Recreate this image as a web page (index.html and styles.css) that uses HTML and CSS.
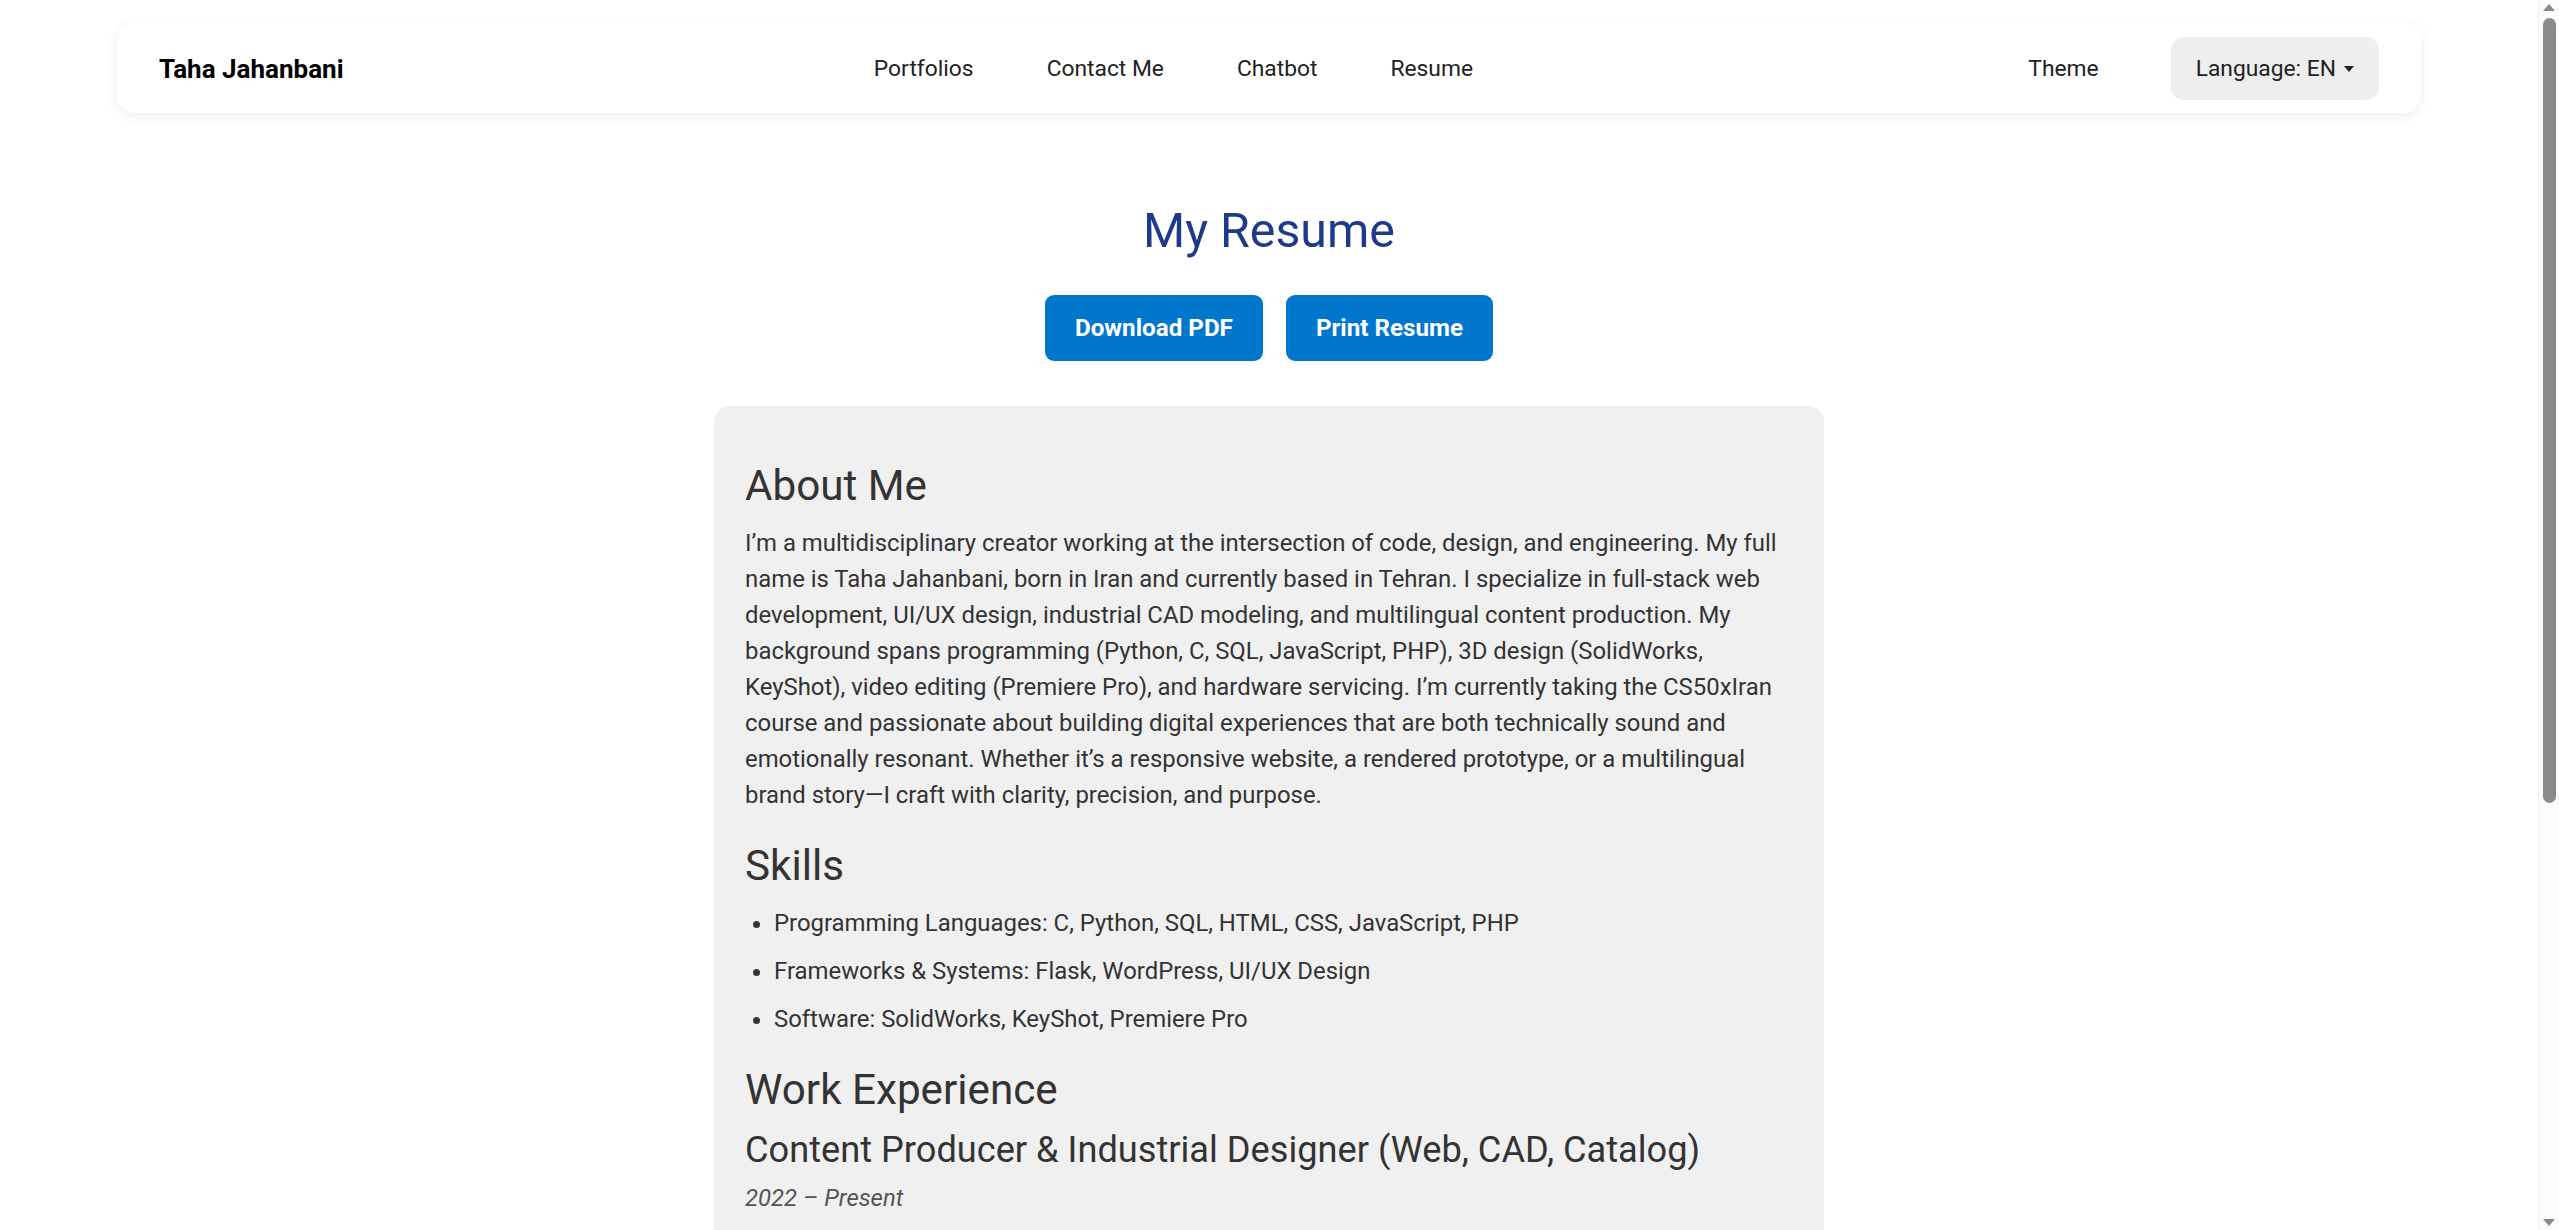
FILE: index.html
```html
<!DOCTYPE html>
<html lang="en">
<head>
<meta charset="utf-8">
<title>Resume - Taha Jahanbani</title>
<link rel="stylesheet" href="styles.css">
</head>
<body>
<header class="navbar">
  <div class="brand">Taha Jahanbani</div>
  <nav class="nav-links">
    <a class="nav-link" href="#">Portfolios</a>
    <a class="nav-link" href="#">Contact Me</a>
    <a class="nav-link" href="#">Chatbot</a>
    <a class="nav-link" href="#">Resume</a>
  </nav>
  <div class="nav-right">
    <button class="theme-btn" type="button">Theme</button>
    <button class="lang-btn" type="button">Language: EN<span class="caret"></span></button>
  </div>
</header>

<main class="page">
  <h1 class="page-title">My Resume</h1>
  <div class="actions">
    <button class="action-btn" type="button">Download PDF</button>
    <button class="action-btn" type="button">Print Resume</button>
  </div>

  <section class="resume">
    <h2 class="section-title">About Me</h2>
    <p class="text">I’m a multidisciplinary creator working at the intersection of code, design, and engineering. My full name is Taha Jahanbani, born in Iran and currently based in Tehran. I specialize in full-stack web development, UI/UX design, industrial CAD modeling, and multilingual content production. My background spans programming (Python, C, SQL, JavaScript, PHP), 3D design (SolidWorks, KeyShot), video editing (Premiere Pro), and hardware servicing. I’m currently taking the CS50xIran course and passionate about building digital experiences that are both technically sound and emotionally resonant. Whether it’s a responsive website, a rendered prototype, or a multilingual brand story—I craft with clarity, precision, and purpose.</p>

    <h2 class="section-title">Skills</h2>
    <ul class="list">
      <li>Programming Languages: C, Python, SQL, HTML, CSS, JavaScript, PHP</li>
      <li>Frameworks &amp; Systems: Flask, WordPress, UI/UX Design</li>
      <li>Software: SolidWorks, KeyShot, Premiere Pro</li>
    </ul>

    <h2 class="section-title">Work Experience</h2>
    <h3 class="job-title">Content Producer &amp; Industrial Designer (Web, CAD, Catalog)</h3>
    <p class="date">2022 – Present</p>
    <ul class="list">
      <li>Designed and developed responsive websites and landing pages</li>
      <li>Modeled and rendered industrial products in SolidWorks and KeyShot</li>
      <li>Produced multilingual catalogs and marketing content</li>
    </ul>

    <h2 class="section-title">Education</h2>
    <h3 class="job-title">CS50xIran – Introduction to Computer Science</h3>
    <p class="date">2024 – Present</p>

    <h2 class="section-title">Languages</h2>
    <ul class="list">
      <li>Persian (Native)</li>
      <li>English (Professional)</li>
    </ul>
  </section>
</main>

<div class="scrollbar" aria-hidden="true">
  <span class="sb-arrow sb-up"></span>
  <span class="sb-thumb"></span>
  <span class="sb-arrow sb-down"></span>
</div>
</body>
</html>
```

FILE: styles.css
```css
* {
  box-sizing: border-box;
}

html, body {
  margin: 0;
  padding: 0;
  background: #ffffff;
}

body {
  font-family: Roboto, "Noto Sans", "Liberation Sans", sans-serif;
  color: #333333;
  padding-top: 23px;
  padding-right: 21px;
  padding-bottom: 80px;
}

/* Navbar */
.navbar {
  display: flex;
  align-items: center;
  justify-content: space-between;
  margin: 0 117px;
  padding: 14px 42px 13px 42px;
  background: #ffffff;
  border-radius: 18px;
  box-shadow: 0 3px 14px rgba(0, 0, 0, 0.07);
}

.brand {
  font-size: 26px;
  font-weight: 700;
  color: #000000;
  line-height: 30px;
}

.nav-links {
  display: flex;
  align-items: center;
  gap: 47px;
}

.nav-link {
  padding: 0 13px;
  font-size: 22.8px;
  color: #222222;
  text-decoration: none;
  line-height: 30px;
}

.nav-right {
  display: flex;
  align-items: center;
  gap: 47px;
}

.theme-btn,
.lang-btn {
  font-family: inherit;
  font-size: 22.8px;
  line-height: 29px;
  color: #222222;
  border: none;
  border-radius: 13px;
  padding: 17px 25px;
  cursor: pointer;
}

.theme-btn {
  background: transparent;
}

.lang-btn {
  background: #eeeeee;
  display: flex;
  align-items: center;
}

.caret {
  display: inline-block;
  width: 0;
  height: 0;
  margin-left: 8px;
  border-left: 5px solid transparent;
  border-right: 5px solid transparent;
  border-top: 6px solid #222222;
}

/* Page */
.page {
  display: flex;
  flex-direction: column;
  align-items: center;
}

.page-title {
  margin: 87px 0 0;
  font-size: 48.3px;
  font-weight: 400;
  line-height: 61px;
  color: #1e3a8a;
}

.actions {
  display: flex;
  gap: 23px;
  margin-top: 34px;
}

.action-btn {
  font-family: inherit;
  font-size: 24.2px;
  font-weight: 700;
  line-height: 30px;
  color: #ffffff;
  background: #0077cc;
  border: none;
  border-radius: 9px;
  padding: 18px 30px;
  cursor: pointer;
}

.resume {
  width: 1110px;
  margin-top: 45px;
  padding: 27px 31px 40px;
  background: #f0f0f0;
  border-radius: 16px;
}

.section-title {
  margin: 28px 0 14px;
  font-size: 42.2px;
  font-weight: 400;
  line-height: 50px;
  color: #333333;
}

.text {
  margin: 0;
  font-size: 23.9px;
  line-height: 36px;
}

.list {
  margin: 0;
  padding-left: 29px;
  font-size: 23.9px;
  line-height: 36px;
}

.list li + li {
  margin-top: 12px;
}

.job-title {
  margin: 0 0 9px;
  font-size: 36.2px;
  font-weight: 400;
  line-height: 42px;
  color: #333333;
}

.date {
  margin: 0 0 14px;
  font-size: 23.9px;
  line-height: 36px;
  font-style: italic;
  color: #555555;
}

/* Browser scrollbar, drawn over the right edge */
.scrollbar {
  position: fixed;
  top: 0;
  right: 0;
  width: 21px;
  height: 100%;
  background: #fbfbfb;
  border-left: 1px solid #f0f0f0;
}

.sb-thumb {
  position: absolute;
  top: 18px;
  left: 4px;
  width: 13px;
  height: 785px;
  border-radius: 7px;
  background: #8a8a8a;
}

.sb-arrow {
  position: absolute;
  left: 4px;
  width: 0;
  height: 0;
  border-left: 6px solid transparent;
  border-right: 6px solid transparent;
}

.sb-up {
  top: 4px;
  border-bottom: 7px solid #8a8a8a;
}

.sb-down {
  bottom: 4px;
  border-top: 7px solid #8a8a8a;
}
```
